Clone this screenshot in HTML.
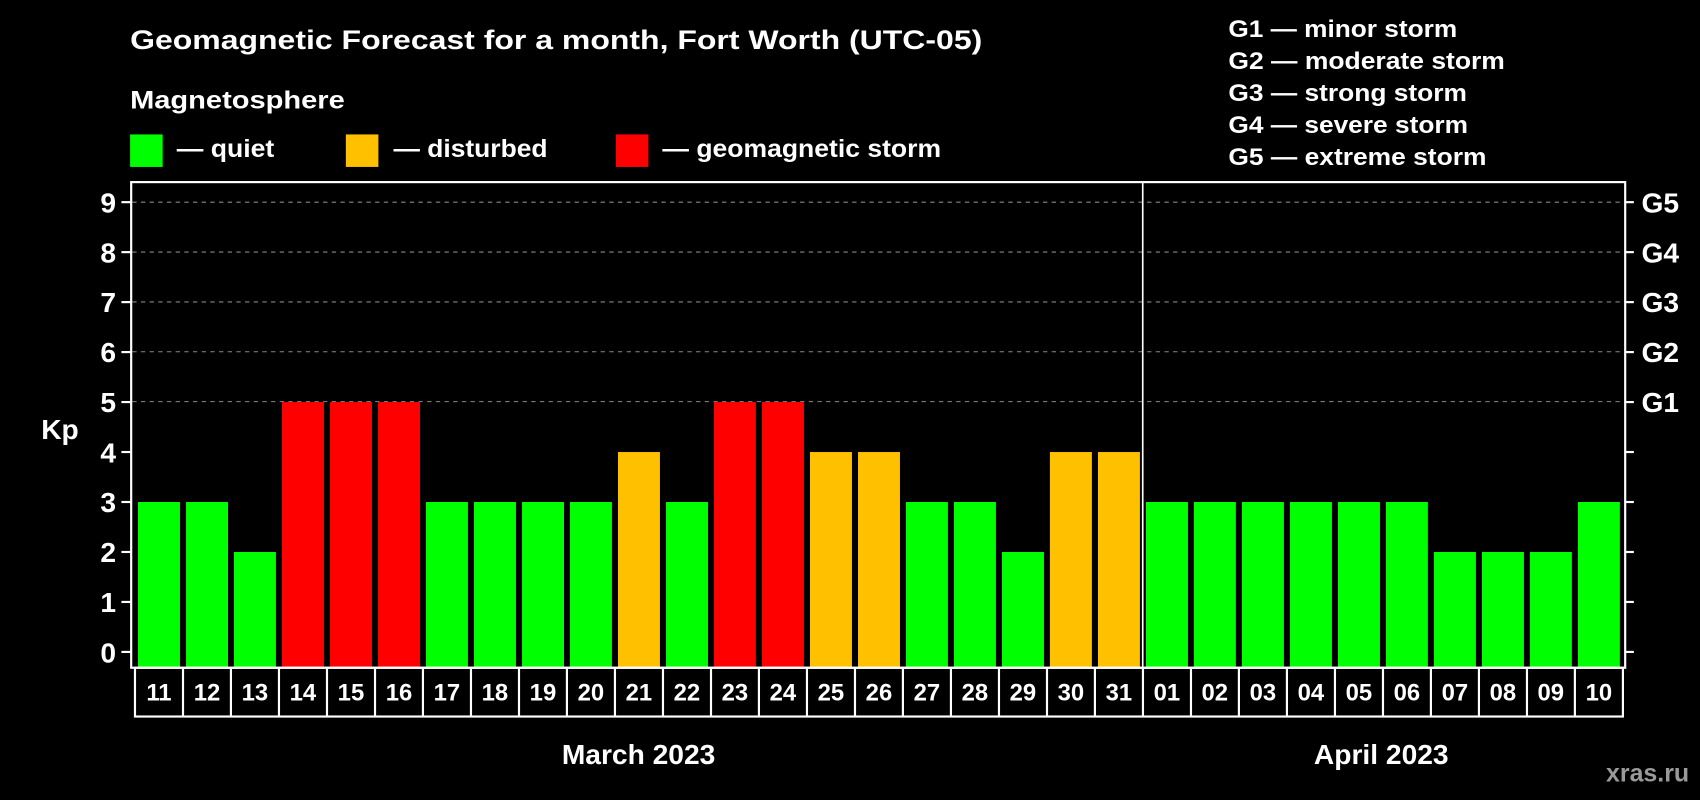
<!DOCTYPE html>
<html><head><meta charset="utf-8"><style>html,body{margin:0;padding:0;background:#000;}svg{display:block}text{font-family:"Liberation Sans",Arial,sans-serif;font-weight:bold;fill:#fff}</style></head>
<body>
<svg width="1700" height="800" viewBox="0 0 1568 738" preserveAspectRatio="none" xmlns="http://www.w3.org/2000/svg">
<rect width="1568" height="738" fill="#000"/>
<text x="120" y="45" font-size="25" textLength="786" lengthAdjust="spacingAndGlyphs">Geomagnetic Forecast for a month, Fort Worth (UTC-05)</text>
<text x="120" y="100" font-size="23" textLength="198" lengthAdjust="spacingAndGlyphs">Magnetosphere</text>
<rect x="120" y="124" width="30" height="30" fill="#00ff00"/>
<text x="163" y="145" font-size="23" textLength="90" lengthAdjust="spacingAndGlyphs">— quiet</text>
<rect x="319" y="124" width="30" height="30" fill="#ffc000"/>
<text x="363" y="145" font-size="23" textLength="142" lengthAdjust="spacingAndGlyphs">— disturbed</text>
<rect x="568" y="124" width="30" height="30" fill="#ff0000"/>
<text x="611" y="145" font-size="23" textLength="257" lengthAdjust="spacingAndGlyphs">— geomagnetic storm</text>
<g font-size="22">
<text x="1133" y="34" textLength="211" lengthAdjust="spacingAndGlyphs">G1 — minor storm</text>
<text x="1133" y="63.5" textLength="255" lengthAdjust="spacingAndGlyphs">G2 — moderate storm</text>
<text x="1133" y="93" textLength="220" lengthAdjust="spacingAndGlyphs">G3 — strong storm</text>
<text x="1133" y="122.5" textLength="221" lengthAdjust="spacingAndGlyphs">G4 — severe storm</text>
<text x="1133" y="152" textLength="238" lengthAdjust="spacingAndGlyphs">G5 — extreme storm</text>
</g>
<g stroke="#888" stroke-width="1" stroke-dasharray="4 4">
<line x1="122" y1="186.5" x2="1498" y2="186.5"/>
<line x1="122" y1="232.5" x2="1498" y2="232.5"/>
<line x1="122" y1="278.5" x2="1498" y2="278.5"/>
<line x1="122" y1="324.5" x2="1498" y2="324.5"/>
<line x1="122" y1="370.5" x2="1498" y2="370.5"/>
</g>
<g stroke="#fff" stroke-width="2">
<line x1="112" y1="186.5" x2="121" y2="186.5"/><line x1="112" y1="232.6" x2="121" y2="232.6"/><line x1="112" y1="278.7" x2="121" y2="278.7"/><line x1="112" y1="324.8" x2="121" y2="324.8"/><line x1="112" y1="370.9" x2="121" y2="370.9"/><line x1="112" y1="417" x2="121" y2="417"/><line x1="112" y1="463.1" x2="121" y2="463.1"/><line x1="112" y1="509.2" x2="121" y2="509.2"/><line x1="112" y1="555.3" x2="121" y2="555.3"/><line x1="112" y1="601.4" x2="121" y2="601.4"/>
<line x1="1499" y1="186.5" x2="1507" y2="186.5"/><line x1="1499" y1="232.6" x2="1507" y2="232.6"/><line x1="1499" y1="278.7" x2="1507" y2="278.7"/><line x1="1499" y1="324.8" x2="1507" y2="324.8"/><line x1="1499" y1="370.9" x2="1507" y2="370.9"/><line x1="1499" y1="417" x2="1507" y2="417"/><line x1="1499" y1="463.1" x2="1507" y2="463.1"/><line x1="1499" y1="509.2" x2="1507" y2="509.2"/><line x1="1499" y1="555.3" x2="1507" y2="555.3"/><line x1="1499" y1="601.4" x2="1507" y2="601.4"/>
</g>
<g font-size="26" text-anchor="end">
<text x="107" y="196">9</text><text x="107" y="242">8</text><text x="107" y="288">7</text><text x="107" y="334">6</text><text x="107" y="380">5</text><text x="107" y="426.5">4</text><text x="107" y="472.5">3</text><text x="107" y="518.5">2</text><text x="107" y="564.5">1</text><text x="107" y="611">0</text>
</g>
<text x="38" y="405" font-size="26">Kp</text>
<g font-size="26">
<text x="1514" y="196">G5</text><text x="1514" y="242">G4</text><text x="1514" y="288">G3</text><text x="1514" y="334">G2</text><text x="1514" y="380">G1</text>
</g>
<g>
<rect x="127.3" y="463.1" width="38.7" height="152.9" fill="#00ff00"/>
<rect x="171.6" y="463.1" width="38.7" height="152.9" fill="#00ff00"/>
<rect x="215.8" y="509.2" width="38.7" height="106.8" fill="#00ff00"/>
<rect x="260.1" y="370.9" width="38.7" height="245.1" fill="#ff0000"/>
<rect x="304.4" y="370.9" width="38.7" height="245.1" fill="#ff0000"/>
<rect x="348.7" y="370.9" width="38.7" height="245.1" fill="#ff0000"/>
<rect x="392.9" y="463.1" width="38.7" height="152.9" fill="#00ff00"/>
<rect x="437.2" y="463.1" width="38.7" height="152.9" fill="#00ff00"/>
<rect x="481.5" y="463.1" width="38.7" height="152.9" fill="#00ff00"/>
<rect x="525.7" y="463.1" width="38.7" height="152.9" fill="#00ff00"/>
<rect x="570.0" y="417" width="38.7" height="199" fill="#ffc000"/>
<rect x="614.3" y="463.1" width="38.7" height="152.9" fill="#00ff00"/>
<rect x="658.5" y="370.9" width="38.7" height="245.1" fill="#ff0000"/>
<rect x="702.8" y="370.9" width="38.7" height="245.1" fill="#ff0000"/>
<rect x="747.1" y="417" width="38.7" height="199" fill="#ffc000"/>
<rect x="791.4" y="417" width="38.7" height="199" fill="#ffc000"/>
<rect x="835.6" y="463.1" width="38.7" height="152.9" fill="#00ff00"/>
<rect x="879.9" y="463.1" width="38.7" height="152.9" fill="#00ff00"/>
<rect x="924.2" y="509.2" width="38.7" height="106.8" fill="#00ff00"/>
<rect x="968.4" y="417" width="38.7" height="199" fill="#ffc000"/>
<rect x="1012.7" y="417" width="38.7" height="199" fill="#ffc000"/>
<rect x="1057.0" y="463.1" width="38.7" height="152.9" fill="#00ff00"/>
<rect x="1101.2" y="463.1" width="38.7" height="152.9" fill="#00ff00"/>
<rect x="1145.5" y="463.1" width="38.7" height="152.9" fill="#00ff00"/>
<rect x="1189.8" y="463.1" width="38.7" height="152.9" fill="#00ff00"/>
<rect x="1234.1" y="463.1" width="38.7" height="152.9" fill="#00ff00"/>
<rect x="1278.3" y="463.1" width="38.7" height="152.9" fill="#00ff00"/>
<rect x="1322.6" y="509.2" width="38.7" height="106.8" fill="#00ff00"/>
<rect x="1366.9" y="509.2" width="38.7" height="106.8" fill="#00ff00"/>
<rect x="1411.1" y="509.2" width="38.7" height="106.8" fill="#00ff00"/>
<rect x="1455.4" y="463.1" width="38.7" height="152.9" fill="#00ff00"/>
</g>
<rect x="121" y="168" width="1378" height="448" fill="none" stroke="#fff" stroke-width="2"/>
<line x1="1054" y1="168" x2="1054" y2="616" stroke="#fff" stroke-width="1.5"/>
<g stroke="#fff" stroke-width="2" fill="none">
<rect x="124.5" y="616" width="1372.4" height="45"/>
<path d="M168.8 616V661M213 616V661M257.3 616V661M301.6 616V661M345.9 616V661M390.1 616V661M434.4 616V661M478.7 616V661M522.9 616V661M567.2 616V661M611.5 616V661M655.8 616V661M700 616V661M744.3 616V661M788.6 616V661M832.8 616V661M877.1 616V661M921.4 616V661M965.7 616V661M1009.9 616V661M1054.2 616V661M1098.5 616V661M1142.7 616V661M1187 616V661M1231.3 616V661M1275.6 616V661M1319.8 616V661M1364.1 616V661M1408.4 616V661M1452.6 616V661"/>
</g>
<g font-size="22" text-anchor="middle">
<text x="146.6" y="646">11</text><text x="190.9" y="646">12</text><text x="235.1" y="646">13</text><text x="279.4" y="646">14</text><text x="323.7" y="646">15</text><text x="368" y="646">16</text><text x="412.2" y="646">17</text><text x="456.5" y="646">18</text><text x="500.8" y="646">19</text><text x="545" y="646">20</text><text x="589.3" y="646">21</text><text x="633.6" y="646">22</text><text x="677.8" y="646">23</text><text x="722.1" y="646">24</text><text x="766.4" y="646">25</text><text x="810.7" y="646">26</text><text x="854.9" y="646">27</text><text x="899.2" y="646">28</text><text x="943.5" y="646">29</text><text x="987.7" y="646">30</text><text x="1032" y="646">31</text><text x="1076.3" y="646">01</text><text x="1120.5" y="646">02</text><text x="1164.8" y="646">03</text><text x="1209.1" y="646">04</text><text x="1253.4" y="646">05</text><text x="1297.6" y="646">06</text><text x="1341.9" y="646">07</text><text x="1386.2" y="646">08</text><text x="1430.4" y="646">09</text><text x="1474.7" y="646">10</text>
</g>
<text x="589" y="705" font-size="26" text-anchor="middle">March 2023</text>
<text x="1274" y="705" font-size="26" text-anchor="middle">April 2023</text>
<text x="1558" y="721" font-size="23" text-anchor="end" style="fill:#9a9a9a">xras.ru</text>
</svg>
</body></html>
